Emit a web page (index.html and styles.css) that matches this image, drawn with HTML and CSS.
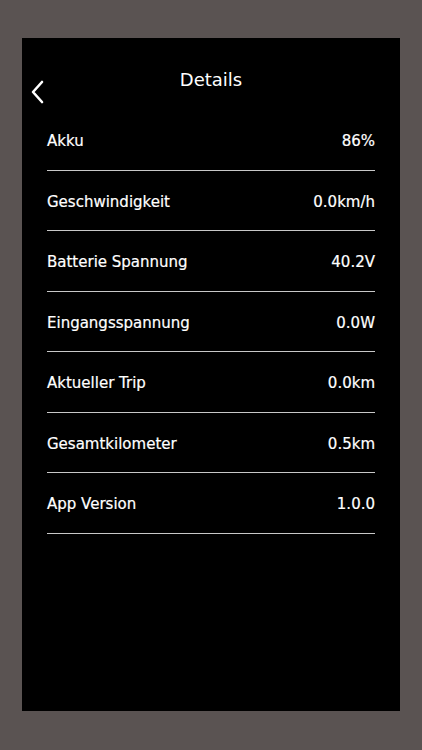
FILE: index.html
```html
<!DOCTYPE html>
<html lang="de">
<head>
    <meta charset="UTF-8">
    <meta name="viewport" content="width=device-width, initial-scale=1.0">
    <title>Details</title>
    <link rel="stylesheet" href="styles.css">
</head>
<body>

    <div class="screen">
        <!-- Header -->
        <header class="top-bar">
            <a href="#" class="back-btn">
                <svg width="14" height="24" viewBox="0 0 14 24">
                    <polyline points="12,2 3,12 12,22" fill="none" stroke="#fff" stroke-width="2.6" stroke-linecap="round" stroke-linejoin="round"/>
                </svg>
            </a>
            <h1>Details</h1>
        </header>

        <!-- Detail list -->
        <ul class="detail-list">
            <li><span>Akku</span><span>86%</span></li>
            <li><span>Geschwindigkeit</span><span>0.0km/h</span></li>
            <li><span>Batterie Spannung</span><span>40.2V</span></li>
            <li><span>Eingangsspannung</span><span>0.0W</span></li>
            <li><span>Aktueller Trip</span><span>0.0km</span></li>
            <li><span>Gesamtkilometer</span><span>0.5km</span></li>
            <li><span>App Version</span><span>1.0.0</span></li>
        </ul>
    </div>

</body>
</html>
```

FILE: styles.css
```css
* {
    margin: 0;
    padding: 0;
    box-sizing: border-box;
}

body {
    font-family: 'DejaVu Sans', sans-serif;
    background: #5a5352;
    color: #fff;
    height: 750px;
    padding: 38px 22px 39px;
}

.screen {
    background: #000;
    height: 673px;
    padding: 0 25px;
}

.top-bar {
    position: relative;
    height: 72px;
    padding-top: 29px;
    text-align: center;
}

.top-bar h1 {
    font-size: 18px;
    font-weight: normal;
    line-height: 26px;
}

.back-btn {
    position: absolute;
    left: -17px;
    top: 42px;
}

.detail-list {
    list-style: none;
}

.detail-list li {
    display: flex;
    justify-content: space-between;
    align-items: center;
    height: 60.5px;
    border-bottom: 1px solid #c8c8c8;
    font-size: 15px;
    padding-top: 3px;
    -webkit-text-stroke: 0.2px #fff;
}
```
